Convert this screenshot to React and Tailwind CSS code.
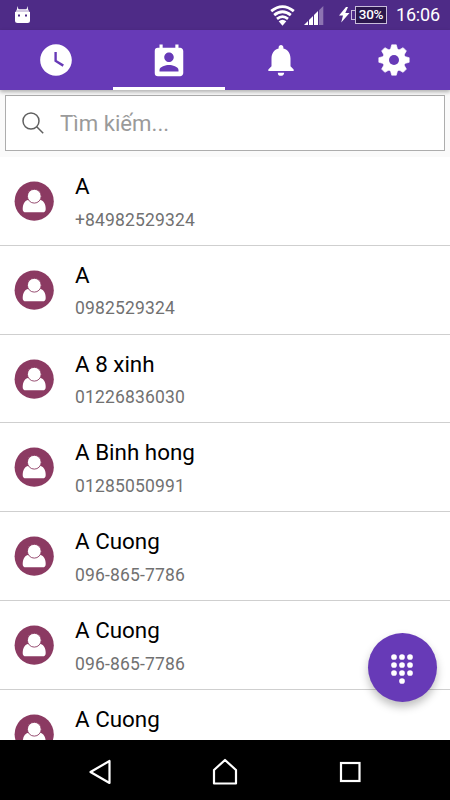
import { useState } from 'react';
import { MdWatchLater, MdPermContactCalendar, MdNotifications } from 'react-icons/md';

const GearIcon = () => (
    <svg width="32" height="32" viewBox="-16 -16 32 32" fill="white">
        {[0, 45, 90, 135, 180, 225, 270, 315].map(angle => (
            <path key={angle} d="M-4-9L-2.300-15.200h4.600L4-9z" stroke="white" strokeWidth="0.600" strokeLinejoin="round" transform={`rotate(${angle})`} />
        ))}
        <circle r="11.600" />
        <circle r="5" fill="#673ab7" />
    </svg>
);

const tabs = [
    { id: 'recent', label: 'Recent', icon: <MdWatchLater className="w-[38px] h-[38px]" /> },
    { id: 'contacts', label: 'Contacts', icon: <MdPermContactCalendar className="w-[38px] h-[38px] mt-[3px]" /> },
    { id: 'notifications', label: 'Notifications', icon: <MdNotifications className="w-[38px] h-[38px]" /> },
    { id: 'settings', label: 'Settings', icon: <GearIcon /> }
];

const contacts = [
    { id: 1, name: 'A', phone: '+84982529324' },
    { id: 2, name: 'A', phone: '0982529324' },
    { id: 3, name: 'A 8 xinh', phone: '01226836030' },
    { id: 4, name: 'A Binh hong', phone: '01285050991' },
    { id: 5, name: 'A Cuong', phone: '096-865-7786' },
    { id: 6, name: 'A Cuong', phone: '096-865-7786' },
    { id: 7, name: 'A Cuong' }
];

const StatusBar = () => (
    <div className="h-[30px] shrink-0 bg-[#4e2b87] flex items-center pl-[14px] pr-[8px] text-white">
        <svg width="17" height="18" viewBox="0 0 17 18" fill="white" className="-mt-px">
            <path d="M3 0l2 4h-2zM14 0l-2 4h2z" opacity="0.9" />
            <path d="M3 3h11l1.500 3h-14z" opacity="0.75" />
            <path fillRule="evenodd" d="M1 6h15v8.500q0 2.500-2.500 2.500h-10q-2.500 0-2.500-2.500zM4 8.500v2h2v-2zM11 8.500v2h2v-2z" />
        </svg>
        <div className="flex-1" />
        <svg width="25" height="21" viewBox="0 0 25 21" fill="none" stroke="white" strokeWidth="2.800" className="mr-[9px] mt-px">
            <path d="M1.200 6.200Q12.500-3 23.800 6.200" />
            <path d="M4.200 10.200Q12.500 3.400 20.800 10.200" />
            <path d="M7 13.800Q12.500 9.400 18 13.800" />
            <path d="M8.700 16.300Q12.500 13.200 16.300 16.300L12.500 20.800z" fill="white" stroke="none" />
        </svg>
        <svg width="20" height="19" viewBox="0 0 20 19" className="mr-[15px] mt-px">
            <path d="M15 4.300L19.300 0v19H15z" fill="#8d74b2" />
            <path d="M0 19l4-4v4zM5 14l4-4v9H5zM10 9l4-4v14h-4z" fill="white" />
        </svg>
        <svg width="11" height="16" viewBox="0 0 11 16" fill="white" className="mr-px">
            <path d="M7 0L0 8.500h4L2.200 15.500 10.500 6H6.300L9 0z" />
        </svg>
        <div className="flex items-center mr-[9px]">
            <div className="w-[4px] h-[10px] border border-r-0 border-[#c9bddb]" />
            <div className="w-[32px] h-[18px] border border-[#c9bddb] bg-[#2c174d] flex items-center justify-center text-[13.500px] leading-none font-medium tracking-[-0.2px]">30%</div>
        </div>
        <span className="text-[18px] leading-none tracking-[-0.2px] w-[46px] whitespace-nowrap">16:06</span>
    </div>
);

const Avatar = () => (
    <svg width="40" height="40" viewBox="0 0 40 40" className="shrink-0">
        <circle cx="20.200" cy="20.200" r="19.600" fill="#8b3a62" />
        <path d="M8.700 28c0-5.500 2.500-8.800 6.500-9.500h10c4 .7 6.500 4 6.500 9.500 0 2.500-1 3.300-3.200 3.300h-16.600c-2.200 0-3.200-.8-3.200-3.300z" fill="white" />
        <circle cx="20.300" cy="15.200" r="6.900" fill="white" stroke="#8b3a62" strokeWidth="0.900" />
    </svg>
);

const ContactRow = ({ contact }) => (
    <div className="h-[88.8px] shrink-0 border-b border-[#cfcfcf] flex pl-[14px]">
        <div className="pt-[24px]">
            <Avatar />
        </div>
        <div className="pl-[21px] pt-[15px]">
            <p className="text-[22.400px] leading-[29px] text-black">{contact.name}</p>
            {contact.phone && (
                <p className="text-[17.500px] leading-[22px] mt-[7.600px] text-[#717171] tracking-[0.16px]">{contact.phone}</p>
            )}
        </div>
    </div>
);

const DialButton = () => (
    <button aria-label="Dial" className="absolute right-[12.800px] bottom-[37.600px] w-[69.600px] h-[69.600px] rounded-full bg-[#673ab7] flex justify-center pt-[20px] shadow-[0_5px_9px_rgba(0,0,0,0.25)]">
        <svg width="24" height="32" viewBox="0 0 24 32" fill="white">
            {[4, 12, 20].map(y => (
                <g key={y}>
                    <circle cx="4" cy={y} r="2.850" />
                    <circle cx="12" cy={y} r="2.850" />
                    <circle cx="20" cy={y} r="2.850" />
                </g>
            ))}
            <circle cx="12" cy="28" r="2.850" />
        </svg>
    </button>
);

const NavBar = () => (
    <div className="h-[60px] shrink-0 bg-black flex items-center justify-between px-[88px]">
        <svg width="24" height="26" viewBox="0 0 24 26" fill="none" stroke="white" strokeWidth="2.200" className="mt-[3px]">
            <path d="M21.500 2v22L2.500 13z" strokeLinejoin="round" />
        </svg>
        <svg width="26" height="28" viewBox="0 0 26 28" fill="none" stroke="white" strokeWidth="2.200" className="mt-[3px]">
            <path d="M2 12L13 2l11 10v13.500H2z" strokeLinejoin="round" />
        </svg>
        <svg width="24" height="24" viewBox="0 0 24 24" fill="none" stroke="white" strokeWidth="2.200" className="mt-[3px]">
            <rect x="3" y="3" width="18.500" height="18" />
        </svg>
    </div>
);

const App = () => {
    const [activeTab, setActiveTab] = useState('contacts');
    const [search, setSearch] = useState('');

    const visible = contacts.filter(c => c.name.toLowerCase().includes(search.toLowerCase()));

    return (
        <div className="w-[450px] h-[800px] flex flex-col bg-white overflow-hidden font-[Roboto,sans-serif]">
            <StatusBar />

            <div className="relative h-[60px] shrink-0 grid grid-cols-4 bg-[#673ab7] text-white shadow-[0_2px_4px_rgba(0,0,0,0.3)]">
                {tabs.map(tab => (
                    <button
                        key={tab.id}
                        aria-label={tab.label}
                        onClick={() => setActiveTab(tab.id)}
                        className={`flex items-center justify-center border-b-[3px] pt-[3px] ${activeTab === tab.id ? 'border-white' : 'border-transparent'}`}
                    >
                        {tab.icon}
                    </button>
                ))}
            </div>

            <div className="h-[67px] shrink-0 bg-[#fafafa] px-[5px] pt-[5px]">
                <div className="h-[56px] bg-white border border-[#adadad] flex items-center pl-[16px]">
                    <svg width="22" height="22" viewBox="0 0 22 22" fill="none" stroke="#606060" strokeWidth="1.500">
                        <circle cx="9" cy="9" r="8" />
                        <path d="M14.700 14.700l6.500 6.500" />
                    </svg>
                    <input
                        type="text"
                        placeholder="Tìm kiếm..."
                        value={search}
                        onChange={(e) => setSearch(e.target.value)}
                        className="ml-[16px] pt-[2px] flex-1 text-[22.200px] placeholder:text-[#9a9a9a] outline-none"
                    />
                </div>
            </div>

            <div className="relative flex-1 min-h-0">
                <div className="h-full overflow-hidden flex flex-col">
                    {visible.map(contact => (
                        <ContactRow key={contact.id} contact={contact} />
                    ))}
                </div>
                <DialButton />
            </div>

            <NavBar />
        </div>
    );
};

export default App;
